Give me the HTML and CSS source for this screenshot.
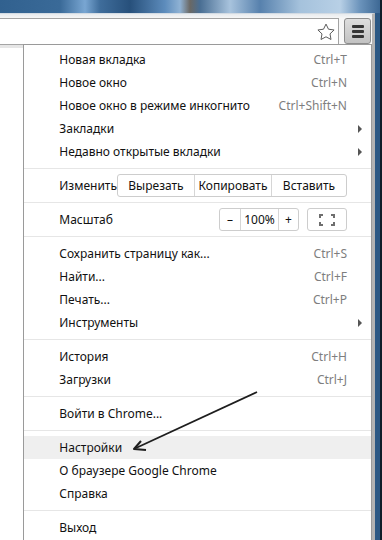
FILE: index.html
```html
<!DOCTYPE html>
<html lang="ru">
<head>
    <meta charset="UTF-8">
    <meta name="viewport" content="width=device-width, initial-scale=1.0">
    <title>Меню Chrome</title>
    <link rel="stylesheet" href="styles.css">
</head>
<body>
    <div class="window">
        <div class="toolbar">
            <div class="omnibox">
                <svg class="star" width="18" height="18" viewBox="0 0 18 18">
                    <polygon points="9,1.1 11.47,6.2 17.08,6.97 12.99,10.9 14,16.48 9,13.8 4,16.48 5.01,10.9 0.92,6.97 6.53,6.2" fill="#fff" stroke="#5c5c5c" stroke-width="1" stroke-linejoin="round"/>
                </svg>
            </div>
            <div class="menu-button">
                <span></span>
                <span></span>
                <span></span>
            </div>
        </div>

        <div class="viewport">
            <div class="page-edge"></div>

            <div class="menu">
                <div class="item"><span>Новая вкладка</span><span class="shortcut">Ctrl+T</span></div>
                <div class="item"><span>Новое окно</span><span class="shortcut">Ctrl+N</span></div>
                <div class="item"><span>Новое окно в режиме инкогнито</span><span class="shortcut">Ctrl+Shift+N</span></div>
                <div class="item"><span>Закладки</span><span></span><span class="arrow"></span></div>
                <div class="item"><span>Недавно открытые вкладки</span><span></span><span class="arrow"></span></div>

                <div class="separator"></div>

                <div class="controls">
                    <span class="label">Изменить</span>
                    <div class="group edit">
                        <span>Вырезать</span>
                        <span>Копировать</span>
                        <span>Вставить</span>
                    </div>
                </div>

                <div class="separator"></div>

                <div class="controls">
                    <span class="label">Масштаб</span>
                    <div class="group zoom">
                        <span>–</span>
                        <span>100%</span>
                        <span>+</span>
                    </div>
                    <div class="group fullscreen">
                        <svg width="16" height="12" viewBox="0 0 16 12">
                            <path d="M1 4V1h3M12 1h3v3M15 8v3h-3M4 11H1V8" fill="none" stroke="#6e6e6e" stroke-width="2"/>
                        </svg>
                    </div>
                </div>

                <div class="separator"></div>

                <div class="item"><span>Сохранить страницу как...</span><span class="shortcut">Ctrl+S</span></div>
                <div class="item"><span>Найти...</span><span class="shortcut">Ctrl+F</span></div>
                <div class="item"><span>Печать...</span><span class="shortcut">Ctrl+P</span></div>
                <div class="item"><span>Инструменты</span><span></span><span class="arrow"></span></div>

                <div class="separator"></div>

                <div class="item"><span>История</span><span class="shortcut">Ctrl+H</span></div>
                <div class="item"><span>Загрузки</span><span class="shortcut">Ctrl+J</span></div>

                <div class="separator"></div>

                <div class="item"><span>Войти в Chrome...</span></div>

                <div class="separator"></div>

                <div class="item active"><span>Настройки</span></div>
                <div class="item"><span>О браузере Google Chrome</span></div>
                <div class="item"><span>Справка</span></div>

                <div class="separator"></div>

                <div class="item"><span>Выход</span></div>
            </div>
        </div>
    </div>

    <!-- стрелка-подсказка поверх меню -->
    <svg class="pointer" width="382" height="540" viewBox="0 0 382 540">
        <line x1="257" y1="392" x2="136" y2="448" stroke="#1e1e1e" stroke-width="1.8"/>
        <polyline points="141,441 134,449 146,450" fill="none" stroke="#1e1e1e" stroke-width="2" stroke-linejoin="round"/>
    </svg>
</body>
</html>
```

FILE: styles.css
```css
* {
    margin: 0;
    padding: 0;
    box-sizing: border-box;
}

body {
    position: relative;
    width: 382px;
    height: 540px;
    overflow: hidden;
    font-family: 'Segoe UI', 'Noto Sans', sans-serif;
    font-size: 12px;
    color: #111;
    background:
        linear-gradient(90deg, transparent 380px, #0f1c29 380px),
        linear-gradient(90deg, #31618f 0, #3a6a98 60px, #79a6d2 85px, #3f6d9b 100px, #27507b 130px, #5d8cbc 165px, #8fb2d4 180px, #6a6864 190px, #496e93 200px, #a8c3dd 230px, #5781ad 260px, #a5c2dc 300px, #b8d0e6 340px, #6b93bb 360px, #3d6894 380px) top / 100% 13px no-repeat,
        #2c5884;
}

.window {
    margin-top: 13px;
    width: 375px;
    height: 527px;
    border-top: 1px solid #d3dbe3;
    border-right: 3px solid #b3b3b3;
    background: #fff;
    display: flex;
    flex-direction: column;
}

.toolbar {
    height: 30px;
    display: flex;
    align-items: flex-end;
    padding-right: 1px;
    background: linear-gradient(#e8ebee, #f6f6f6 4px, #fafafa);
}

.omnibox {
    flex: 1;
    height: 26px;
    margin-right: 5px;
    border: 1px solid #a3a3a3;
    border-left: none;
    border-bottom: none;
    background: #fff;
    display: flex;
    align-items: center;
    justify-content: flex-end;
    padding-right: 3px;
}

.menu-button {
    width: 27px;
    height: 26px;
    border: 1px solid #8c8c8c;
    border-radius: 3px;
    background: linear-gradient(#dedede, #c2c2c2);
    display: flex;
    flex-direction: column;
    align-items: center;
    justify-content: center;
    gap: 2px;
}

.menu-button span {
    width: 12px;
    height: 3px;
    border-radius: 1px;
    background: #353535;
}

.viewport {
    flex: 1;
    display: flex;
    align-items: flex-start;
}

.page-edge {
    width: 27px;
    height: 4px;
    border-top: 1px solid #a5a5a5;
    background: #e6e6e6;
}

.menu {
    flex: 1;
    align-self: stretch;
    border: 1px solid #9a9a9a;
    border-bottom: none;
    padding-top: 3px;
    background: #fff;
}

.item {
    display: grid;
    grid-template-columns: 1fr auto 24px;
    align-items: center;
    height: 23px;
    line-height: 23px;
    padding-left: 35px;
    white-space: nowrap;
}

.item.active {
    background: #efefef;
}

.shortcut {
    color: #7e7e7e;
}

.arrow {
    width: 0;
    height: 0;
    margin-left: 11px;
    border-left: 4px solid #555;
    border-top: 4px solid transparent;
    border-bottom: 4px solid transparent;
}

.separator {
    height: 1px;
    margin: 5px 0;
    background: #e6e6e6;
}

.controls {
    display: flex;
    align-items: center;
    height: 23px;
    padding-left: 35px;
    padding-right: 24px;
}

.controls .label {
    flex: 1;
}

.group {
    display: flex;
    height: 23px;
    border: 1px solid #cdcdcd;
    border-radius: 3px;
}

.group span {
    display: flex;
    align-items: center;
    justify-content: center;
    border-left: 1px solid #d6d6d6;
}

.group span:first-child {
    border-left: none;
}

.edit span:nth-child(1) { width: 76px; }
.edit span:nth-child(2) { width: 77px; }
.edit span:nth-child(3) { width: 75px; }

.zoom span:nth-child(1) { width: 20px; }
.zoom span:nth-child(2) { width: 38px; }
.zoom span:nth-child(3) { width: 20px; }

.fullscreen {
    width: 40px;
    margin-left: 8px;
    align-items: center;
    justify-content: center;
}

.pointer {
    position: absolute;
    top: 0;
    left: 0;
    pointer-events: none;
}
```
